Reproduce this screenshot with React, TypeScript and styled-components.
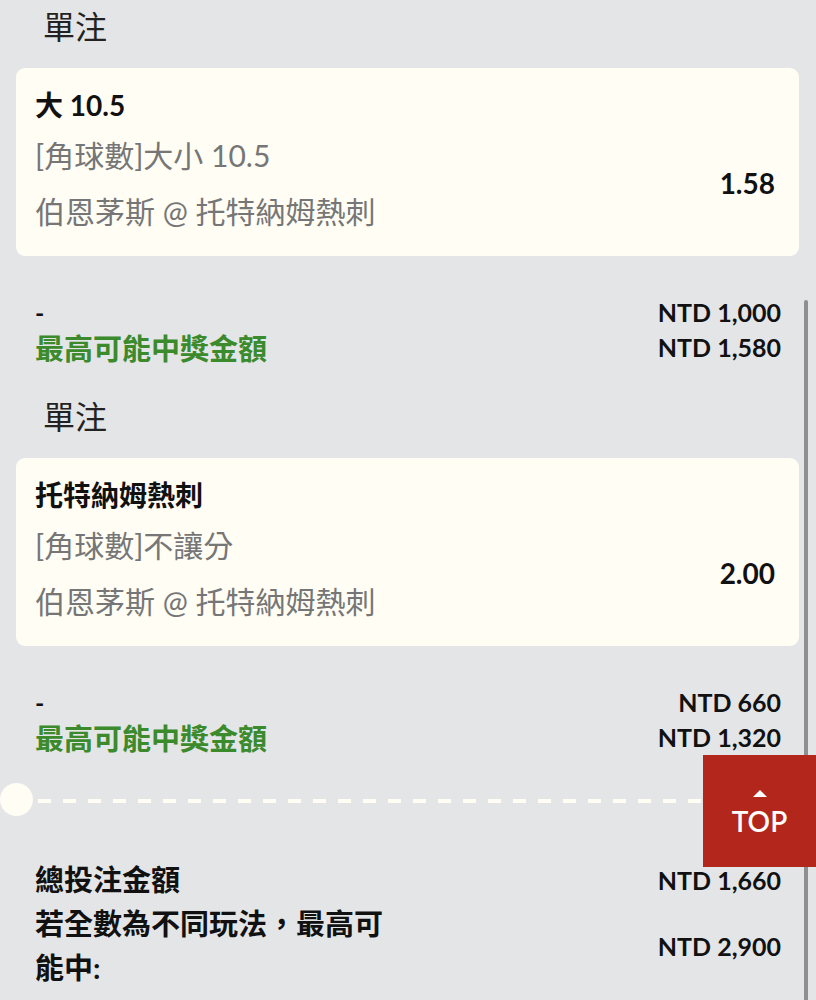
import React from "react";
import styled, { createGlobalStyle } from "styled-components";

const GlobalStyle = createGlobalStyle`
  html, body {
    margin: 0;
    padding: 0;
    background: #e4e5e7;
  }
  body {
    font-family: Lato, "Noto Sans CJK TC", "Noto Sans", sans-serif;
    color: #111;
  }
  * { box-sizing: border-box; }
`;

const Page = styled.div`
  position: relative;
  width: 816px;
  height: 1000px;
  overflow: hidden;
  padding: 0 17px 0 16px;
  background: #e4e5e7;
`;

const Bet = styled.section`
  padding-bottom: 26px;
`;

const SectionTitle = styled.div`
  height: 54px;
  line-height: 54px;
  padding-left: 27px;
  font-size: 32px;
  color: #222;
`;

const Card = styled.div`
  margin-top: 14px;
  height: 188px;
  background: #fffdf4;
  border-radius: 9px;
  padding: 17px 24px 0 19px;
`;

const CardTitle = styled.div`
  font-size: 28px;
  font-weight: 700;
  line-height: 40px;
  color: #111;
`;

const CardBody = styled.div`
  margin-top: 8px;
  display: flex;
  align-items: center;
  justify-content: space-between;
`;

const CardLines = styled.div`
  display: flex;
  flex-direction: column;
  gap: 12px;
`;

const Line = styled.div`
  font-size: 30px;
  line-height: 44px;
  color: #767676;
`;

const Odds = styled.div`
  font-size: 28px;
  font-weight: 700;
  color: #111;
`;

const Amounts = styled.div`
  margin-top: 38px;
  padding: 0 18px 0 19px;
  display: grid;
  grid-template-columns: 1fr auto;
  grid-auto-rows: 35px;
  align-items: center;
`;

const AmountLabel = styled.div<{ $green?: boolean }>`
  font-size: ${(p) => (p.$green ? "29px" : "25px")};
  font-weight: 700;
  color: ${(p) => (p.$green ? "#3b8a2c" : "#111")};
`;

const AmountValue = styled.div`
  font-size: 25px;
  font-weight: 700;
  text-align: right;
  color: #111;
`;

const Divider = styled.div`
  margin: 3px -17px 0 -16px;
  height: 33px;
  display: flex;
  align-items: center;
  gap: 5px;
`;

const Notch = styled.div`
  width: 33px;
  height: 33px;
  flex: none;
  border-radius: 50%;
  background: #fffdf4;
`;

const Dashes = styled.div`
  flex: 1;
  height: 4px;
  margin-top: 3px;
  background: repeating-linear-gradient(
    to right,
    #fffdf4 0 13px,
    transparent 13px 25px
  );
`;

const Summary = styled.div`
  margin-top: 42px;
  padding: 0 18px 0 19px;
  display: grid;
  grid-template-columns: 1fr auto;
  align-items: center;
`;

const SummaryLabel = styled.div`
  font-size: 29px;
  font-weight: 700;
  line-height: 44px;
  max-width: 372px;
  color: #111;
`;

const TopButton = styled.button`
  position: absolute;
  right: 0;
  top: 755px;
  width: 113px;
  height: 112px;
  border: none;
  background: #b2261c;
  color: #fff;
  display: flex;
  flex-direction: column;
  align-items: center;
  justify-content: center;
  gap: 7px;
  padding: 6px 0 0 0;
  font-family: Lato, sans-serif;
  font-size: 28px;
  font-weight: 600;
  cursor: pointer;
`;

const Arrow = styled.span`
  width: 0;
  height: 0;
  border-left: 7px solid transparent;
  border-right: 7px solid transparent;
  border-bottom: 7px solid #fff;
`;

const Scrollbar = styled.div`
  position: absolute;
  right: 8px;
  top: 300px;
  bottom: 0;
  width: 4px;
  border-radius: 2px 2px 0 0;
  background: #8f8f8f;
`;

type BetData = {
  title: string;
  market: string;
  match: string;
  odds: string;
  stake: string;
  win: string;
};

const bets: BetData[] = [
  {
    title: "大 10.5",
    market: "[角球數]大小 10.5",
    match: "伯恩茅斯 @ 托特納姆熱刺",
    odds: "1.58",
    stake: "NTD 1,000",
    win: "NTD 1,580",
  },
  {
    title: "托特納姆熱刺",
    market: "[角球數]不讓分",
    match: "伯恩茅斯 @ 托特納姆熱刺",
    odds: "2.00",
    stake: "NTD 660",
    win: "NTD 1,320",
  },
];

export default function App() {
  return (
    <>
      <GlobalStyle />
      <Page>
        {bets.map((b, i) => (
          <Bet key={i}>
            <SectionTitle>單注</SectionTitle>
            <Card>
              <CardTitle>{b.title}</CardTitle>
              <CardBody>
                <CardLines>
                  <Line>{b.market}</Line>
                  <Line>{b.match}</Line>
                </CardLines>
                <Odds>{b.odds}</Odds>
              </CardBody>
            </Card>
            <Amounts>
              <AmountLabel>-</AmountLabel>
              <AmountValue>{b.stake}</AmountValue>
              <AmountLabel $green>最高可能中獎金額</AmountLabel>
              <AmountValue>{b.win}</AmountValue>
            </Amounts>
          </Bet>
        ))}
        <Divider>
          <Notch />
          <Dashes />
          <Notch />
        </Divider>
        <Summary>
          <SummaryLabel>總投注金額</SummaryLabel>
          <AmountValue>NTD 1,660</AmountValue>
          <SummaryLabel>若全數為不同玩法，最高可能中:</SummaryLabel>
          <AmountValue>NTD 2,900</AmountValue>
        </Summary>
        <Scrollbar />
        <TopButton>
          <Arrow />
          TOP
        </TopButton>
      </Page>
    </>
  );
}
